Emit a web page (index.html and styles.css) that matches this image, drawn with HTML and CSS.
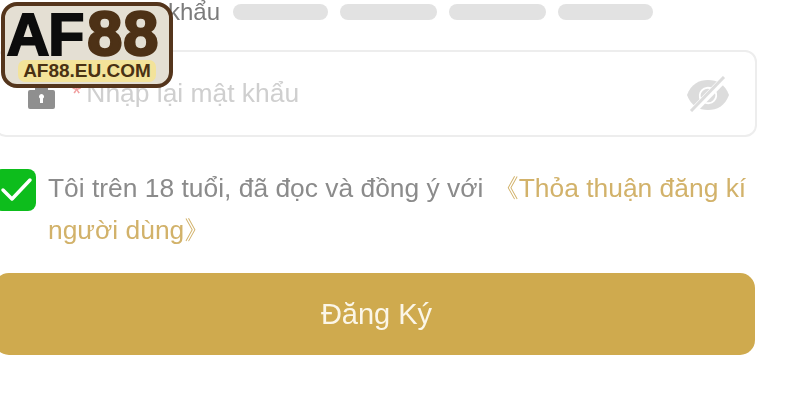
FILE: index.html
```html
<!DOCTYPE html>
<html lang="vi">
<head>
  <meta charset="UTF-8">
  <meta name="viewport" content="width=device-width, initial-scale=1.0">
  <title>Đăng Ký - AF88</title>
  <link rel="stylesheet" href="styles.css">
</head>
<body>
  <!-- Logo badge sits over the form -->
  <div class="logo">
    <div class="logo-mark"><span class="logo-af">AF</span><span class="logo-88">88</span></div>
    <div class="logo-url">AF88.EU.COM</div>
  </div>

  <form class="register-form">
    <div class="strength-row">
      <span class="strength-label">Độ mạnh mật khẩu</span>
      <div class="strength-bars">
        <span class="bar bar-a"></span>
        <span class="bar bar-b"></span>
        <span class="bar bar-b"></span>
        <span class="bar bar-a"></span>
      </div>
    </div>

    <div class="field">
      <svg class="lock-icon" viewBox="0 0 27 25" width="27" height="25">
        <path fill="#8f8f8f" fill-rule="evenodd" d="M7 6V4a6.500 6.500 0 0 1 13 0v2h5a2 2 0 0 1 2 2v15a2 2 0 0 1-2 2H2a2 2 0 0 1-2-2V8a2 2 0 0 1 2-2zM13.500 10a2.500 2.500 0 0 0-1.500 4.500V19h3v-4.500a2.500 2.500 0 0 0-1.500-4.500z"/>
      </svg>
      <span class="required">*</span>
      <span class="placeholder">Nhập lại mật khẩu</span>
      <svg class="eye-icon" viewBox="0 0 44 36" width="44" height="36">
        <path fill="#dcdcdc" d="M1 19C5 8 13 4 22 4s17 4 21 15c-4 11-12 15-21 15S5 30 1 19z"/>
        <path d="M15 24a8 8 0 0 1 11-11M29 15a8 8 0 0 1-11 11" fill="none" stroke="#fff" stroke-width="2"/>
        <path d="M6 36 39 2" stroke="#fff" stroke-width="7"/>
        <path d="M5 35 38 1" stroke="#dcdcdc" stroke-width="3"/>
      </svg>
    </div>

    <div class="agree">
      <span class="checkbox">
        <svg viewBox="0 0 38 42" width="38" height="42">
          <path d="M5 21l9 9L32 11" fill="none" stroke="#fff" stroke-width="3.500" stroke-linecap="round" stroke-linejoin="round"/>
        </svg>
      </span>
      <p class="agree-text">Tôi trên 18 tuổi, đã đọc và đồng ý với <a href="#">《Thỏa thuận đăng kí người dùng》</a></p>
    </div>

    <button type="button" class="submit">Đăng Ký</button>
  </form>
</body>
</html>
```

FILE: styles.css
```css
html, body {
  margin: 0;
  padding: 0;
  height: 400px;
  overflow: hidden;
}

body {
  position: relative;
  background-color: #fff;
  font-family: "Liberation Sans", Arial, sans-serif;
  color: #8b8b8b;
}

/* Logo badge */
.logo {
  position: absolute;
  top: 2px;
  left: 1px;
  z-index: 10;
  width: 172px;
  height: 86px;
  box-sizing: border-box;
  border: 4px solid #54351c;
  border-radius: 16px;
  background-color: #e4dfd3;
  display: flex;
  flex-direction: column;
  align-items: center;
}

.logo-mark {
  display: flex;
  align-items: baseline;
  height: 50px;
  margin-top: 2px;
  margin-right: 8px;
  line-height: 50px;
  font-weight: bold;
  white-space: nowrap;
}

.logo-af {
  color: #0c0c0c;
  font-size: 59px;
  letter-spacing: -1px;
  -webkit-text-stroke: 2px #0c0c0c;
}

.logo-88 {
  margin-left: 4px;
  font-size: 63px;
  letter-spacing: 1px;
  color: #4d3116;
  -webkit-text-stroke: 2.500px #4d3116;
}

.logo-url {
  margin-top: 2px;
  width: 138px;
  height: 22px;
  border-radius: 7px;
  background-color: #f3e39a;
  color: #4a3113;
  font-size: 19px;
  line-height: 22px;
  font-weight: bold;
  text-align: center;
}

/* Form */
.register-form {
  width: 763px;
  margin-left: -6px;
  filter: blur(0.5px);
}

.strength-row {
  display: flex;
  align-items: center;
  height: 24px;
}

.strength-label {
  width: 239px;
  box-sizing: border-box;
  padding-right: 13px;
  font-size: 24px;
  line-height: 24px;
  white-space: nowrap;
  color: #7b7b7b;
  text-align: right;
}

.strength-bars {
  display: flex;
  gap: 12px;
}

.bar {
  height: 16px;
  border-radius: 8px;
  background-color: #e2e2e2;
}

.bar-a {
  width: 95px;
}

.bar-b {
  width: 97px;
}

.field {
  display: flex;
  align-items: center;
  height: 83px;
  margin-top: 26px;
  border: 2px solid #ededed;
  border-radius: 12px;
  padding-left: 32px;
  padding-right: 25px;
}

.lock-icon {
  margin-top: 6px;
  margin-right: 17px;
}

.required {
  color: #f1a0a0;
  font-size: 24px;
  margin-right: 5px;
}

.placeholder {
  flex: 1;
  font-size: 26.400px;
  color: #cfcfcf;
}

.agree {
  display: flex;
  align-items: flex-start;
  margin-top: 32px;
}

.checkbox {
  display: block;
  width: 42px;
  height: 42px;
  flex-shrink: 0;
  border-radius: 8px;
  background-color: #0dbd1c;
}

.checkbox svg {
  display: block;
  margin-left: 4px;
}

.agree-text {
  margin: -2px 0 0 12px;
  font-size: 26.400px;
  line-height: 42px;
  color: #8b8b8b;
}

.agree-text a {
  margin-left: 2px;
  color: #d2b26a;
  text-decoration: none;
}

.submit {
  display: block;
  width: 761px;
  height: 82px;
  margin-top: 22px;
  border: none;
  border-radius: 15px;
  background-color: #cfaa4e;
  color: #fbf6e8;
  font-family: inherit;
  font-size: 29px;
  padding: 0 0 0 4px;
  cursor: pointer;
}
```
